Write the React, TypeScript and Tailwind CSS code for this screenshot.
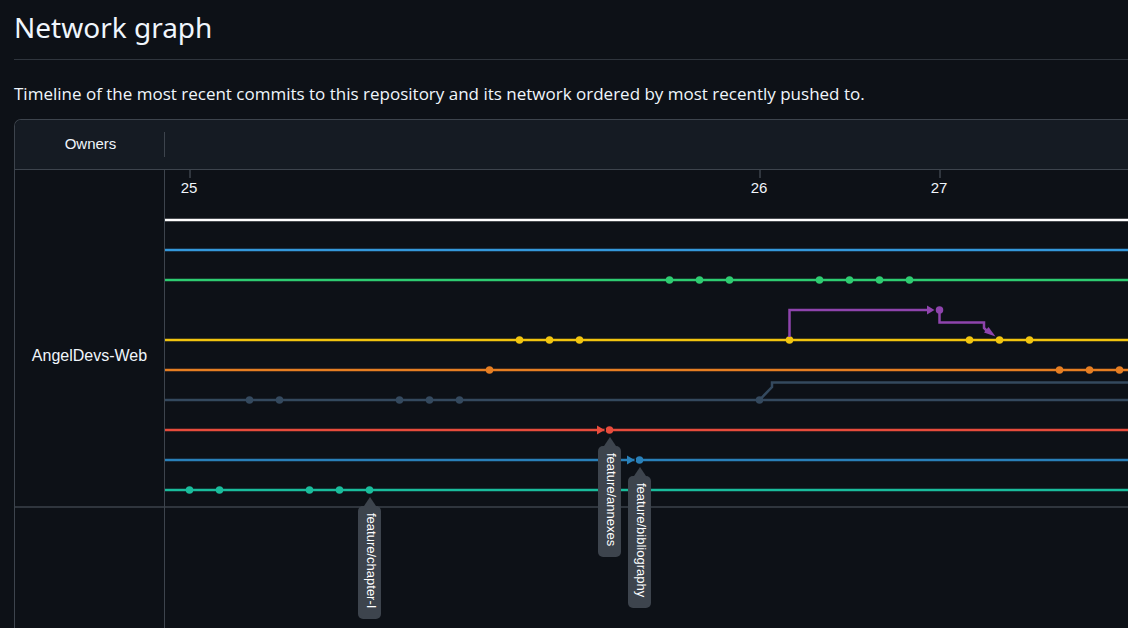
type Branch = { color: string; y: number; commits: number[] };

const branches: Branch[] = [
  { color: '#ffffff', y: 50, commits: [] },
  { color: '#3498db', y: 80, commits: [] },
  { color: '#2ecc71', y: 110, commits: [504, 534, 564, 654, 684, 714, 744] },
  { color: '#f1c40f', y: 170, commits: [354, 384, 414, 624, 804, 834, 864] },
  { color: '#e67e22', y: 200, commits: [324, 894, 924, 954] },
  { color: '#34495e', y: 230, commits: [84, 114, 234, 264, 294, 594] },
  { color: '#e74c3c', y: 260, commits: [444] },
  { color: '#2980b9', y: 290, commits: [474] },
  { color: '#1abc9c', y: 320, commits: [24, 54, 144, 174, 204] },
];

const days = [
  { label: '25', x: 24 },
  { label: '26', x: 594 },
  { label: '27', x: 774 },
];

const tags = [
  { name: 'feature/annexes', place: 'left-[433px] top-[267px]' },
  { name: 'feature/bibliography', place: 'left-[463px] top-[297px]' },
  { name: 'feature/chapter-I', place: 'left-[193px] top-[327px]' },
];

function Graph() {
  return (
    <svg className="block h-[458px] w-full" role="img" aria-label="Commit timeline">
      {days.map((d) => (
        <g key={d.label}>
          <path d={`M${d.x + 1} 0v8`} stroke="#30363e" strokeWidth="2" />
          <text x={d.x} y="23" textAnchor="middle" className="fill-[#f0f6fc] text-[15px]">
            {d.label}
          </text>
        </g>
      ))}
      <path d="M0 337H6000" stroke="#2f353d" strokeWidth="2" />
      <path d="M594.5 230L607 217V212.500H6000" fill="none" stroke="#34495e" strokeWidth="2.5" />
      {branches.map((b) => (
        <g key={b.y} fill={b.color}>
          <path d={`M0 ${b.y}H6000`} stroke={b.color} strokeWidth="2.5" />
          {b.commits.map((x) => (
            <circle key={x} cx={x + 0.5} cy={b.y} r="3.75" />
          ))}
        </g>
      ))}
      <g stroke="#8e44ad" strokeWidth="2.500" fill="none">
        <path d="M624.500 167V140H764" />
        <path d="M774.500 140V152.500H819V158L822 161" />
      </g>
      <g fill="#8e44ad">
        <circle cx="774.500" cy="140" r="3.75" />
        <path d="M762 135.500L769.500 140L762 144.500Z" />
        <path d="M823.500 157L830.500 166.500L819 162.500Z" />
      </g>
      <path d="M432 255.500L439.500 260L432 264.500Z" fill="#e74c3c" />
      <path d="M462 285.500L469.500 290L462 294.500Z" fill="#2980b9" />
      <path d="M439.500 260H441M469.500 290H471" stroke="#0d1117" strokeWidth="3" />
    </svg>
  );
}

export default function App() {
  return (
    <main className="min-h-screen overflow-hidden bg-[#0d1117] pl-3.5 font-['Liberation_Sans',Arial,sans-serif] text-[#f0f6fc]">
      <header className="border-b border-[#2f353d] pt-2 pb-3 font-['Noto_Sans',sans-serif]">
        <h1 className="text-[28px] leading-[39px]">Network graph</h1>
      </header>
      <p className="pt-5 pb-3 font-['Open_Sans','Noto_Sans',sans-serif] text-[17px] leading-[27px] whitespace-nowrap">
        Timeline of the most recent commits to this repository and its network ordered by most recently pushed to.
      </p>
      <section className="overflow-hidden rounded-tl-[7px] border-t border-l border-[#3d444d]">
        <div className="flex items-center border-b border-[#3d444d] bg-[#151b23] py-3 text-[15px]">
          <h2 className="w-[150px] border-r border-[#3d444d] pt-0.5 pb-[3px] pl-0.5 text-center leading-5">Owners</h2>
        </div>
        <div className="flex">
          <div className="w-[150px] shrink-0 border-r border-[#3d444d]">
            <div className="flex h-[338px] items-center justify-center border-b-2 border-[#2f353d] pt-9 text-base">
              AngelDevs-Web
            </div>
          </div>
          <div className="relative min-w-0 flex-1">
            <Graph />
            {tags.map((t) => (
              <div key={t.name} className={`absolute flex flex-col items-center ${t.place}`}>
                <svg className="h-[9px] w-3" viewBox="0 0 12 9" aria-hidden="true">
                  <path d="M6 0L12 9H0Z" fill="#3d444d" />
                </svg>
                <span className="rounded-[5px] bg-[#3d444d] pt-[7px] pb-[11px] pl-1 text-[13px] leading-[19px] text-white [writing-mode:vertical-rl]">
                  {t.name}
                </span>
              </div>
            ))}
          </div>
        </div>
      </section>
    </main>
  );
}
